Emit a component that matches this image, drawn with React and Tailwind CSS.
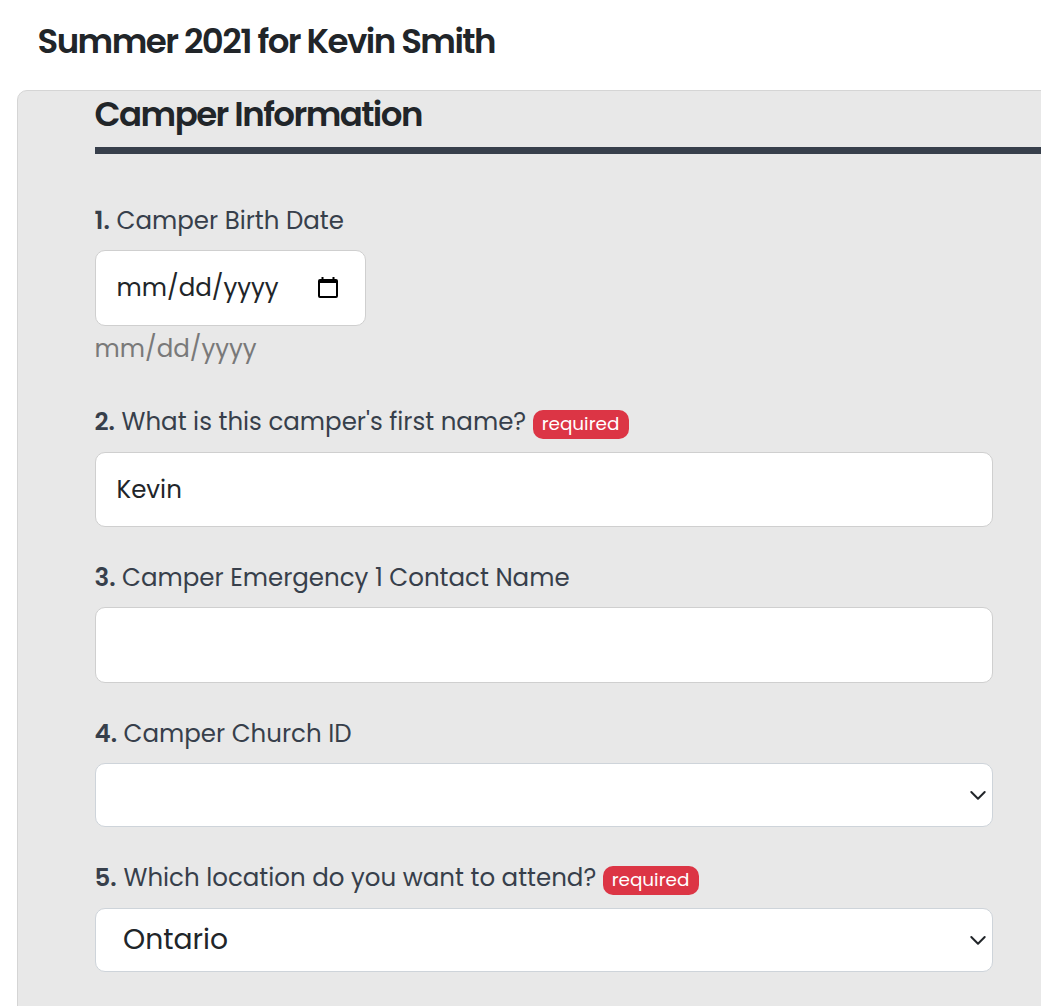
function Required() {
  return (
    <span className="mt-[5px] ml-[7px] flex h-[29px] w-24 items-center justify-center rounded-[10px] bg-[#dc3545] pb-px text-[18.4px] text-white">
      required
    </span>
  );
}

function Label({ number, numberWidth, textWidth = "", children, required }) {
  return (
    <div className="-ml-[0.5px] flex h-9 items-center whitespace-nowrap text-[24.5px] text-[#373f4b]">
      <span className={`shrink-0 font-semibold ${numberWidth}`}>{number}.</span>
      <span className={`shrink-0 ${textWidth}`}>{children}</span>
      {required && <Required />}
    </div>
  );
}

function Select({ value }) {
  return (
    <button
      type="button"
      className="flex h-16 w-[898px] items-center justify-between rounded-[10px] border border-[#ced4da] bg-white pr-[5px] pl-[27px] text-[28.2px] text-[#212529]"
    >
      <span className="pb-0.5">{value}</span>
      <svg width="18" height="18" viewBox="0 0 18 18" fill="none" stroke="#212529" strokeWidth="2" strokeLinecap="round" strokeLinejoin="round">
        <path d="M2.3 6l6.7 6.7L15.700 6" />
      </svg>
    </button>
  );
}

export default function App() {
  return (
    <main className="h-[1006px] w-[1041px] overflow-hidden bg-white pl-[17px] font-['Poppins','Inter',sans-serif] text-[#212529]">
      <h1 className="flex h-[90px] items-center pb-2 pl-[20.5px] text-[34px] font-semibold whitespace-nowrap tracking-[-1.55px]">
        Summer 2021 for Kevin Smith
      </h1>
      <section className="h-[930px] w-[1100px] rounded-[10px] border border-[#d5d5d5] bg-[#e8e8e8] pl-[77px]">
        <h2 className="flex h-[63px] items-center border-b-[7px] border-[#373f4b] pb-2.5 text-[34px] font-semibold whitespace-nowrap tracking-[-1.55px]">
          <span className="-ml-[0.5px]">Camper Information</span>
        </h2>

        <div className="mt-[49px]">
          <Label number="1" numberWidth="w-[22px]">Camper Birth Date</Label>
          <div className="mt-[11px] flex h-[76px] w-[271px] items-center justify-between rounded-[10px] border border-[#cfcfcf] bg-white pr-[26px] pl-[20.5px]">
            <span className="text-[24.5px]">mm/dd/yyyy</span>
            <svg className="mb-0.5" width="22" height="22" viewBox="0 0 22 22" fill="none">
              <path fillRule="evenodd" fill="#000" d="M4.500 1h2v2h9V1h2v2h1.500q2 0 2 2v15q0 2-2 2H3q-2 0-2-2V5q0-2 2-2h1.500zM3 7v13h16V7z" />
            </svg>
          </div>
          <p className="mt-[5px] -ml-[0.5px] flex h-9 items-center text-[24.5px] text-[#797979]">mm/dd/yyyy</p>
        </div>

        <div className="mt-[37px]">
          <Label number="2" numberWidth="w-[27px]" textWidth="w-[404px]" required>What is this camper's first name?</Label>
          <input className="mt-3 block h-[75px] w-[898px] rounded-[10px] border border-[#cfcfcf] bg-white px-[20.5px] text-[24.5px]" defaultValue="Kevin" />
        </div>

        <div className="mt-[33px]">
          <Label number="3" numberWidth="w-[27.5px]">Camper Emergency 1 Contact Name</Label>
          <input className="mt-[11px] block h-[76px] w-[898px] rounded-[10px] border border-[#cfcfcf] bg-white px-[20.5px] text-[24.5px]" />
        </div>

        <div className="mt-[33px]">
          <Label number="4" numberWidth="w-[29px]">Camper Church ID</Label>
          <div className="mt-[11px]"><Select value="" /></div>
        </div>

        <div className="mt-[33px]">
          <Label number="5" numberWidth="w-[29px]" textWidth="w-[472px]" required>Which location do you want to attend?</Label>
          <div className="mt-3"><Select value="Ontario" /></div>
        </div>
      </section>
    </main>
  );
}
